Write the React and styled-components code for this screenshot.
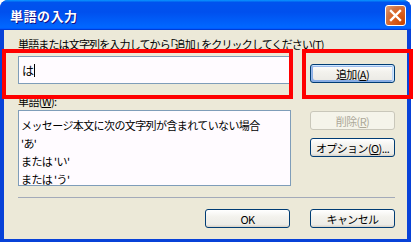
import React from 'react'
import styled, { createGlobalStyle, css } from 'styled-components'

const Global = createGlobalStyle`
    html, body {
        margin: 0;
        padding: 0;
        background: #ffffff;
    }
    body {
        font-family: "Noto Sans CJK JP", "Liberation Sans", sans-serif;
    }
`

const Window = styled.div`
    position: relative;
    width: 411px;
    height: 242px;
    box-sizing: border-box;
    background: #0842d8;
    border-radius: 8px 8px 0 0;
    padding: 0 4px 3px 4px;
    display: flex;
    flex-direction: column;
`

const TitleBar = styled.div`
    height: 30px;
    margin: 0 -4px;
    padding: 0 5px 0 10px;
    border-radius: 8px 8px 0 0;
    background: linear-gradient(to bottom, #0997ff 0%, #0053ee 8%, #0050ee 40%, #0066ff 88%, #0066ff 93%, #005bff 95%, #003dd7 96%, #003dd7 100%);
    display: flex;
    align-items: center;
    justify-content: space-between;
`

const Title = styled.span`
    color: #ffffff;
    font-size: 13px;
    font-weight: 700;
    letter-spacing: 0.5px;
    text-shadow: 1px 1px #0f1089;
`

const Close = styled.div`
    width: 21px;
    height: 21px;
    box-sizing: border-box;
    border: 1px solid #ffffff;
    border-radius: 3px;
    background: radial-gradient(circle at 90% 90%, #cc4600 0%, #dc6527 55%, #cd7546 70%, #e5a078 100%);
    display: flex;
    align-items: center;
    justify-content: center;
`

const Body = styled.div`
    flex: 1;
    background: #ece9d8;
    padding: 8px 12px 11px 14px;
    display: flex;
    flex-direction: column;
    font-size: 11px;
    letter-spacing: -0.6px;
    color: #000000;
`

const Label = styled.div`
    height: 12px;
    line-height: 12px;
    white-space: nowrap;
    letter-spacing: ${p => p.$tight ? '-0.85px' : '-0.6px'};
    margin-top: ${p => p.$top || 0}px;
`

const Key = styled.span`
    text-decoration: underline;
`

const Row = styled.div`
    display: flex;
    gap: 19px;
    align-items: flex-start;
    margin-top: ${p => p.$top}px;
`

const Input = styled.div`
    width: 273px;
    height: 28px;
    box-sizing: border-box;
    border: 1px solid #7f9db9;
    background: #fffbff;
    padding-left: 3px;
    display: flex;
    align-items: center;
    font-size: 12px;
`

const Caret = styled.span`
    display: inline-block;
    width: 1px;
    height: 13px;
    background: #000000;
    margin-left: 1px;
`

const List = styled.div`
    width: 273px;
    height: 76px;
    box-sizing: border-box;
    border: 1px solid #7f9db9;
    background: #fffbff;
    padding: 5px 0 0 2px;
    overflow: hidden;
`

const Item = styled.div`
    height: 18px;
    line-height: 18px;
    white-space: nowrap;
`

const Side = styled.div`
    display: flex;
    flex-direction: column;
    gap: 8px;
    padding-top: ${p => p.$top || 0}px;
`

const Button = styled.div`
    width: 85px;
    height: 19px;
    box-sizing: border-box;
    border: 1px solid #003c74;
    border-radius: 3px;
    background: linear-gradient(180deg, #ffffff 0%, #f3f2ed 40%, #ecebe6 86%, #d6d0c5 100%);
    display: flex;
    align-items: center;
    justify-content: center;
    white-space: nowrap;
    margin-top: ${p => p.$top || 0}px;
    ${p => p.$default && css`
        box-shadow: inset -1px 1px #cee7ff, inset 1px 2px #98b8ea, inset -2px 0 #bcd4f6, inset 1px -1px #89ade4, inset 2px -2px #89ade4;
    `}
    ${p => p.$disabled && css`
        border-color: #c9c7ba;
        background: #f5f4ea;
        color: #aca899;
    `}
`

const Separator = styled.div`
    height: 1px;
    margin-top: 11px;
    background: #a3aab9;
`

const Footer = styled.div`
    display: flex;
    justify-content: flex-end;
    gap: 20px;
    margin-top: 11px;
`

const Highlight = styled.div`
    position: absolute;
    top: 49px;
    left: ${p => p.$left}px;
    width: ${p => p.$width}px;
    height: 50px;
    box-sizing: border-box;
    border: 4px solid #ff0000;
`

const items = [
    'メッセージ本文に次の文字列が含まれていない場合',
    '\'あ\'',
    'または \'い\'',
    'または \'う\'',
]

const App = () => {
    return (
        <>
            <Global />
            <Window>
                <TitleBar>
                    <Title>単語の入力</Title>
                    <Close>
                        <svg width="13" height="13" viewBox="0 0 13 13">
                            <path d="M2 2 L11 11 M11 2 L2 11" stroke="#ffffff" strokeWidth="2.4" strokeLinecap="square" />
                        </svg>
                    </Close>
                </TitleBar>
                <Body>
                    <Label $tight>単語または文字列を入力してから｢追加｣ をクリックしてください(<Key>T</Key>)</Label>
                    <Row $top={6}>
                        <Input>は<Caret /></Input>
                        <Button $default $top={8}>追加(<Key>A</Key>)</Button>
                    </Row>
                    <Label $top={11}>単語(<Key>W</Key>):</Label>
                    <Row $top={3}>
                        <List>
                            {items.map((t, i) => <Item key={i}>{t}</Item>)}
                        </List>
                        <Side $top={1}>
                            <Button $disabled>削除(<Key>R</Key>)</Button>
                            <Button>オプション(<Key>O</Key>)...</Button>
                        </Side>
                    </Row>
                    <Separator />
                    <Footer>
                        <Button>OK</Button>
                        <Button>キャンセル</Button>
                    </Footer>
                </Body>
                <Highlight $left={2} $width={291} />
                <Highlight $left={302} $width={111} />
            </Window>
        </>
    )
}

export default App
